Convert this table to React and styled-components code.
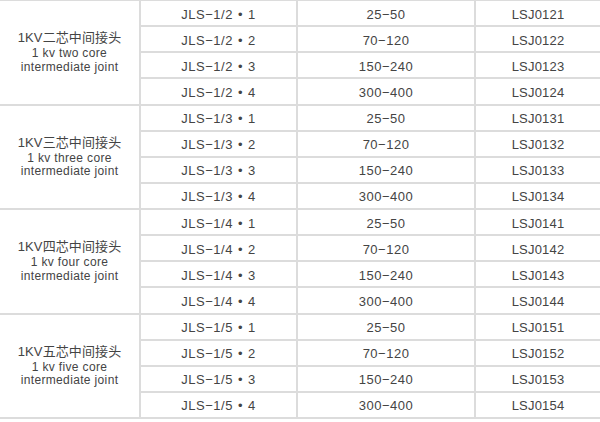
import React from "react";
import styled, { createGlobalStyle } from "styled-components";

const GlobalStyle = createGlobalStyle`
  html, body { margin: 0; padding: 0; background: #ffffff; }
  * { box-sizing: border-box; }
`;

const LINE = "#dcdcdc";

const Table = styled.div`
  width: 600px;
  border-top: 1px solid ${LINE};
  font-family: "Liberation Sans", Arial, "Noto Sans CJK SC", sans-serif;
  color: #444444;
`;

const Group = styled.div`
  display: grid;
  grid-template-columns: 141px 157px 178px 1fr;
  grid-template-rows: repeat(4, 26.125px);
`;

const LabelCell = styled.div`
  grid-row: 1 / span 4;
  grid-column: 1;
  display: flex;
  flex-direction: column;
  align-items: center;
  justify-content: center;
  border-right: 2px solid ${LINE};
  border-bottom: 2px solid ${LINE};
  padding-bottom: 1px;
`;

const Title = styled.div`
  font-size: 13px;
  line-height: 17px;
  margin-bottom: 1px;
  letter-spacing: 0.1px;
`;

const Sub = styled.div`
  font-size: 12px;
  line-height: 13.5px;
  letter-spacing: 0.35px;
  text-align: center;
`;

const Cell = styled.div`
  display: flex;
  align-items: center;
  justify-content: center;
  gap: 5px;
  font-size: 13px;
  letter-spacing: ${(p) => (p.$tight ? "0.2px" : "0.5px")};
  border-bottom: 2px solid ${LINE};
  border-right: ${(p) => (p.$last ? "none" : `2px solid ${LINE}`)};
  padding-top: 2px;
  white-space: pre;
`;

const Part = styled.span``;

const groups = [
  { n: 2, cn: "二", en: "two" },
  { n: 3, cn: "三", en: "three" },
  { n: 4, cn: "四", en: "four" },
  { n: 5, cn: "五", en: "five" },
];

const ranges = ["25\u221250", "70\u2212120", "150\u2212240", "300\u2212400"];

export default function App() {
  return (
    <>
      <GlobalStyle />
      <Table>
        {groups.map((g) => (
          <Group key={g.n}>
            <LabelCell>
              <Title>1KV{g.cn}芯中间接头</Title>
              <Sub>1 kv {g.en} core</Sub>
              <Sub>intermediate joint</Sub>
            </LabelCell>
            {ranges.map((r, i) => (
              <React.Fragment key={i}>
                <Cell>
                  <Part>{`JLS\u22121/${g.n}`}</Part>
                  <Part>{"\u2022"}</Part>
                  <Part>{`${i + 1}`}</Part>
                </Cell>
                <Cell>{r}</Cell>
                <Cell $last $tight>{`LSJ01${g.n}${i + 1}`}</Cell>
              </React.Fragment>
            ))}
          </Group>
        ))}
      </Table>
    </>
  );
}
